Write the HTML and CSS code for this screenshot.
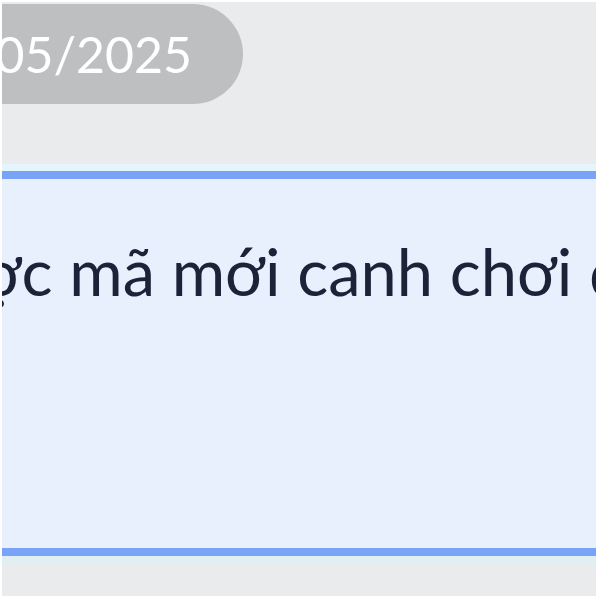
FILE: index.html
```html
<!DOCTYPE html>
<html lang="vi">
<head>
    <meta charset="UTF-8">
    <meta name="viewport" content="width=device-width, initial-scale=1.0">
    <title>Tin nhắn</title>
    <link rel="stylesheet" href="styles.css">
</head>
<body>

<div class="screen">
    <div class="date-row">
        <div class="date-pill">12/05/2025</div>
    </div>

    <div class="message">
        <p class="message-text">Bạn nhận được mã mới canh chơi đi nhé</p>
    </div>

    <div class="footer-gap"></div>
</div>

</body>
</html>
```

FILE: styles.css
```css
body {
    font-family: Lato, "Noto Sans", sans-serif;
    margin: 0;
    padding: 0;
    background-color: white;
    overflow: hidden;
}

.screen {
    width: 594px;
    height: 594px;
    margin: 2px 0 0 2px;
    background-color: #eaebed;
    display: flex;
    flex-direction: column;
    overflow: hidden;
}

.date-row {
    display: flex;
    padding-top: 2px;
    height: 161px;
    flex-shrink: 0;
}

.date-pill {
    height: 100px;
    width: 241px;
    background-color: #bebfc1;
    border-radius: 0 50px 50px 0;
    color: white;
    font-size: 50px;
    display: flex;
    align-items: center;
    justify-content: flex-end;
    padding-right: 51px;
    box-sizing: border-box;
    white-space: nowrap;
    overflow: hidden;
}

.message {
    height: 385px;
    flex-shrink: 0;
    background-color: #e8f0fe;
    border-top: 8px solid #78a3f7;
    border-bottom: 8px solid #78a3f7;
    box-shadow: 0 -7px 0 #e4f6fc, 0 7px 0 #e0f0f2;
    box-sizing: border-box;
    overflow: hidden;
    margin-top: 6px;
}

.message-text {
    margin: 0;
    padding-top: 53px;
    margin-left: -382px;
    font-size: 65px;
    color: #1c2238;
    white-space: nowrap;
}

.footer-gap {
    flex: 1;
}
```
